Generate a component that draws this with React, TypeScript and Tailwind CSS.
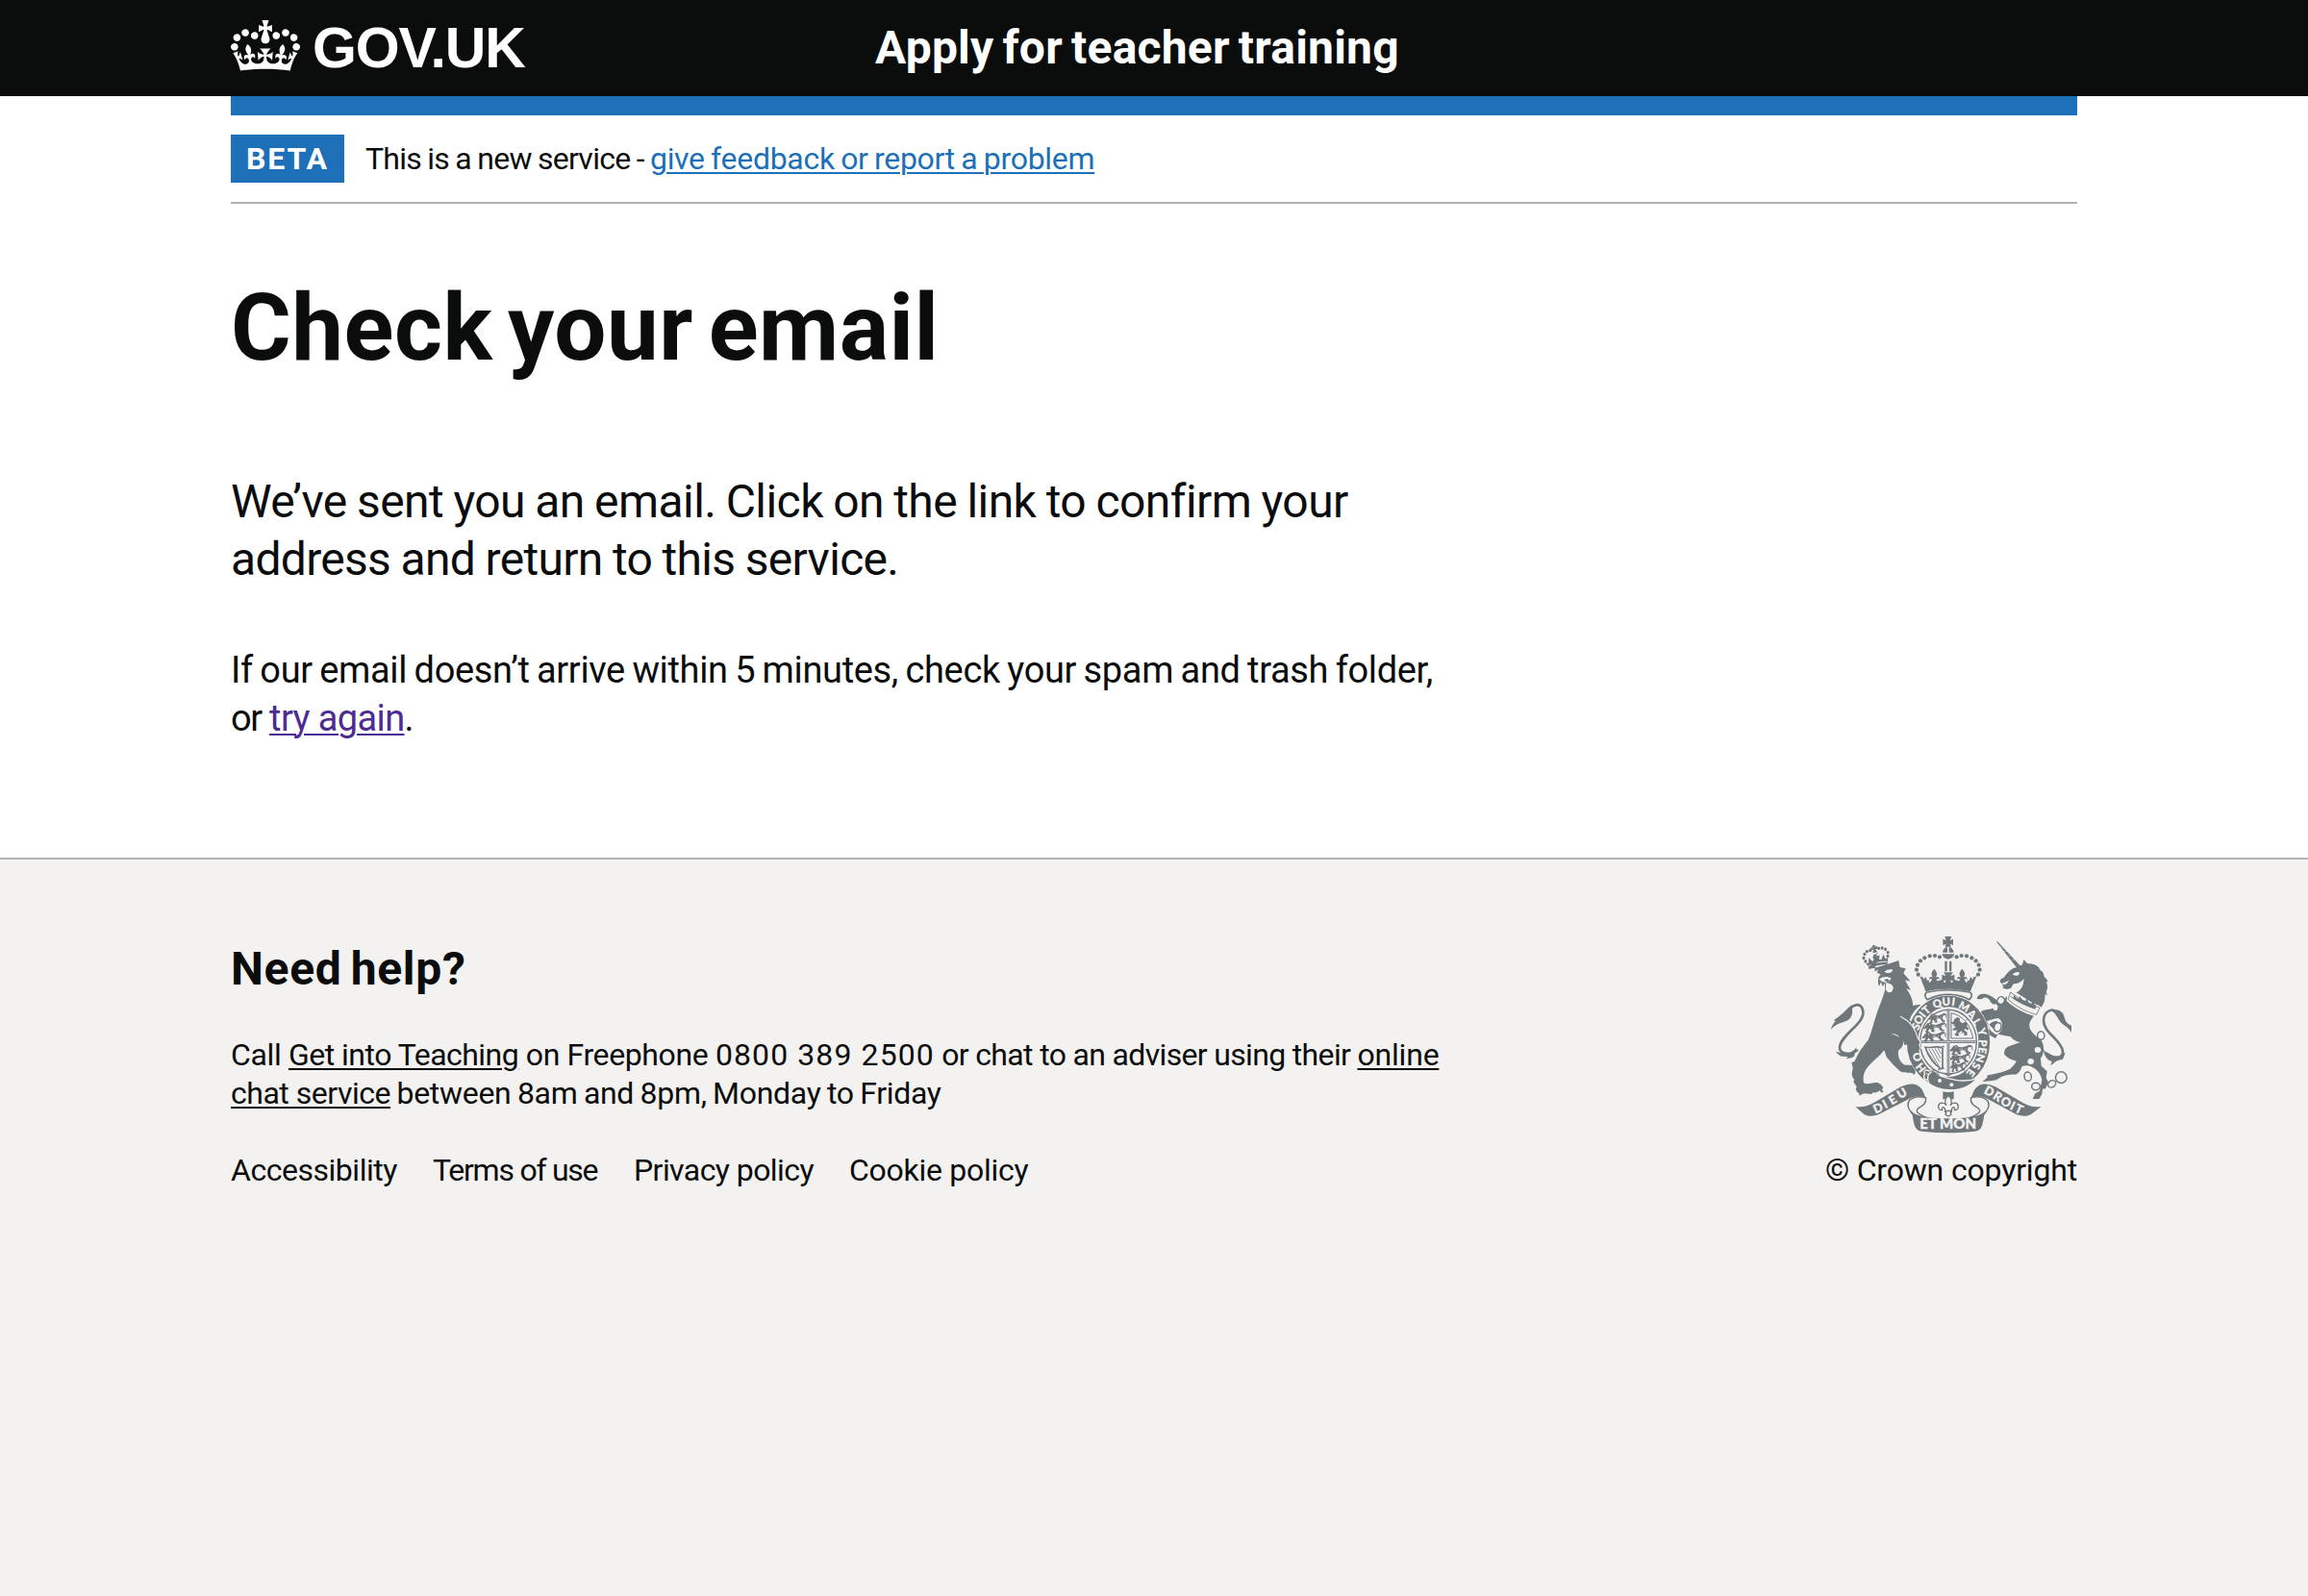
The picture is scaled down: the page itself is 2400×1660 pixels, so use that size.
import React from 'react';

const INK = '#6f777b';
const PAPER = '#f3f2f1';

function Crown() {
  return (
    <svg className="mt-px block h-[53px] w-[72px]" viewBox="0 0 132 97" fill="currentColor" aria-hidden="true">
      <path
        fillRule="evenodd"
        d="M25 30.2c3.5 1.5 7.7-.2 9.1-3.7 1.5-3.6-.2-7.8-3.9-9.2-3.6-1.4-7.6.3-9.1 3.9-1.4 3.5.3 7.5 3.9 9zM9 39.5c3.6 1.5 7.8-.2 9.2-3.7 1.5-3.6-.2-7.8-3.9-9.1-3.6-1.5-7.6.2-9.1 3.8-1.4 3.5.3 7.5 3.8 9zM4.4 57.2c3.5 1.5 7.7-.2 9.1-3.8 1.5-3.6-.2-7.7-3.9-9.1-3.5-1.5-7.6.3-9.1 3.8-1.4 3.5.3 7.6 3.9 9.1zm38.3-21.4c3.5 1.5 7.7-.2 9.1-3.8 1.5-3.6-.2-7.7-3.9-9.1-3.6-1.5-7.6.3-9.1 3.8-1.3 3.6.4 7.7 3.9 9.1zm64.4-5.6c-3.6 1.5-7.8-.2-9.1-3.7-1.5-3.6.2-7.8 3.8-9.2 3.6-1.4 7.7.3 9.2 3.9 1.3 3.5-.4 7.5-3.9 9zm15.9 9.3c-3.6 1.5-7.7-.2-9.1-3.7-1.5-3.6.2-7.8 3.7-9.1 3.6-1.5 7.7.2 9.2 3.8 1.5 3.5-.3 7.5-3.8 9zm4.7 17.7c-3.6 1.5-7.8-.2-9.2-3.8-1.5-3.6.2-7.7 3.9-9.1 3.6-1.5 7.7.3 9.2 3.8 1.3 3.5-.4 7.6-3.9 9.1zM89.3 35.8c-3.6 1.5-7.8-.2-9.2-3.8-1.4-3.6.2-7.7 3.9-9.1 3.6-1.5 7.7.3 9.2 3.8 1.4 3.6-.3 7.7-3.9 9.1zM69.7 17.7l8.9 4.7V9.3l-8.9 2.8c-.2-.3-.5-.6-.9-.9L72.4 0H59.6l3.5 11.2c-.3.3-.6.5-.9.9l-8.8-2.8v13.1l8.8-4.7c.3.3.6.7.9.9l-5 15.4v.1c-.2.8-.4 1.6-.4 2.4 0 4.1 3.1 7.5 7 8.1h.2c.3 0 .7.1 1 .1.4 0 .7 0 1-.1h.2c4-.6 7.1-4.1 7.1-8.1 0-.8-.1-1.7-.4-2.4V34l-5.1-15.4c.4-.2.7-.6 1-.9zM66 92.8c16.9 0 32.8 1.1 47.1 3.2 4-16.9 8.9-26.7 14-33.5l-9.6-3.4c1 4.9 1.1 7.2 0 10.2-1.5-1.4-3-4.3-4.2-8.7L108.6 76c2.8-2 5-3.2 7.5-3.3-4.4 9.4-10 11.9-13.6 11.2-4.3-.8-6.3-4.6-5.6-7.9 1-4.7 5.7-5.9 8-.5 4.3-8.7-3-11.4-7.6-8.8 7.1-7.2 7.9-13.5 2.1-21.1-8 6.1-8.1 12.3-4.5 20.8-4.7-5.4-12.1-2.5-9.5 6.2 3.4-5.2 7.9-2 7.2 3.1-.6 4.3-6.4 7.8-13.5 7.2-10.3-.9-10.9-8-11.2-13.8 2.5-.5 7.1 1.8 11 7.3L80.2 60c-4.1 4.4-8 5.3-12.3 5.4 1.4-4.4 8-11.6 8-11.6H55.5s6.4 7.2 7.9 11.6c-4.2-.1-8-1-12.3-5.4l1.4 16.4c3.9-5.5 8.5-7.7 10.9-7.3-.3 5.8-.9 12.8-11.1 13.8-7.2.6-12.9-2.9-13.5-7.2-.7-5 3.8-8.3 7.1-3.1 2.7-8.7-4.6-11.6-9.4-6.2 3.7-8.5 3.6-14.7-4.6-20.8-5.8 7.6-5 13.9 2.2 21.1-4.7-2.6-11.9.1-7.7 8.8 2.3-5.5 7.1-4.2 8.1.5.7 3.3-1.3 7.1-5.7 7.9-3.5.7-9-1.8-13.5-11.2 2.5.1 4.7 1.3 7.5 3.3l-4.7-15.4c-1.2 4.4-2.7 7.2-4.3 8.7-1.1-3-.9-5.3 0-10.2l-9.5 3.4c5 6.9 9.9 16.7 14 33.5 14.8-2.1 30.8-3.2 47.7-3.2z"
      />
    </svg>
  );
}

/* Letters on the garter and scrolls: character, centre x, centre y, rotation */
const GARTER: [string, number, number, number][] = [
  ['H', 352, 452, -128],
  ['O', 341, 418, -112],
  ['S', 337, 323, -66],
  ['O', 345, 301, -57],
  ['I', 357, 285, -50],
  ['T', 369, 271, -42],
  ['Q', 403, 251, -18],
  ['U', 431, 245, -3],
  ['I', 454, 246, 8],
  ['M', 487, 261, 28],
  ['A', 511, 284, 43],
  ['L', 527, 309, 60],
  ['Y', 543, 340, 72],
  ['P', 546, 375, 92],
  ['E', 545, 398, 98],
  ['N', 538, 422, 106],
  ['S', 525, 446, 116],
  ['E', 508, 467, 126],
];
const SCROLLS: [string, number, number, number][] = [
  ['D', 218, 577, -24],
  ['I', 240, 565, -28],
  ['E', 264, 551, -31],
  ['U', 293, 531, -31],
  ['D', 566, 525, 28],
  ['R', 592, 541, 32],
  ['O', 618, 558, 30],
  ['I', 639, 570, 26],
  ['T', 659, 580, 24],
];

const BEADS: [number, number][] = [
  [411, 106],
  [396, 102],
  [380, 103],
  [364, 109],
  [351, 118],
  [342, 131],
  [339, 146],
  [344, 161],
];

const LION_CROWN_BEADS: [number, number][] = [
  [13, -22],
  [23, -21],
  [32, -15],
  [37, -5],
  [34, 5],
];

function Glyphs({ items, size }: { items: [string, number, number, number][]; size: number }) {
  return (
    <g
      fill={PAPER}
      stroke={PAPER}
      strokeWidth="0.8"
      fontFamily="Lato, sans-serif"
      fontWeight={900}
      fontSize={size}
      textAnchor="middle"
    >
      {items.map(([ch, x, y, r], i) => (
        <text key={i} transform={`translate(${x} ${y}) rotate(${r})`} y={size * 0.36}>
          {ch}
        </text>
      ))}
    </g>
  );
}

function PassantLion({ x, y, w = 1 }: { x: number; y: number; w?: number }) {
  return (
    <g transform={`translate(${x} ${y}) scale(${w} 1.12)`}>
      <path
        fill={INK}
        d="M2 8l5-5 8-1 4 5 10 1 10-3 9-4 7 2-3 4-6 1-3 6 3 6 6 2-1 4-9-1-6-8-6-2-8 4 4 5-2 4-8-1 1-4-5-4-4 5 2 4-5 2-6-3 3-3 2-7-6 3-4-3 4-3z"
      />
      <circle cx="12" cy="7" r="1.6" fill={PAPER} />
      <path d="M22 14l8-2M40 12l-4 3" stroke={PAPER} strokeWidth="1.6" />
      <path d="M50 4l7 3-3 5 4 3" fill="none" stroke={INK} strokeWidth="2.5" />
    </g>
  );
}

function FleurAndArches() {
  return (
    <g fill={INK}>
      {BEADS.map(([x, y]) => (
        <circle key={x} cx={x} cy={y} r="6.3" />
      ))}
      <path d="M394 143c10 11 11 18 4 27 5-4 12-2 12 6-3-3-7-3-9 1l8 12h-30l8-12c-2-4-6-4-9-1 0-8 7-10 12-6-7-9-6-16 4-27z" />
      <path d="M349 166l12 4-2 8 9-10 4 12 6-2-2 16-15 2z" />
      <path d="M360 176l22 10 26-6 12-4 6 12v12h-56z" />
    </g>
  );
}

function CoatOfArms() {
  return (
    <svg className="block h-[214px] w-[260px]" viewBox="60 30 780 642" aria-hidden="true">
      {/* Imperial crown */}
      <path fill={INK} d="M427 42h21l-5 12 10-4v19l-10-4 4 9h-20l4-9-10 4V50l10 4z" />
      <path
        fill={INK}
        d="M420 92c1-10 7-16 15-17v17zM455 92c-1-10-7-16-15-17v17zM418 97h39c-2 9-9 15-19 16-11-1-18-7-20-16z"
      />
      <path fill={INK} d="M427 119h7v32h-7zM441 119h7v32h-7z" />
      <path fill={INK} d="M423 154h30l-9 12 13-5v22l-13-5 6 14h-25l6-14-13 5v-22l13 5z" />
      <FleurAndArches />
      <g transform="matrix(-1 0 0 1 875 0)">
        <FleurAndArches />
      </g>
      <path fill={INK} d="M357 184c25 4 48 2 80 2s56 2 81-2l-11 30c-45-10-95-10-140 0z" />
      <path
        d="M372 216c44-9 88-9 132 0 9 3 9 14 0 23-43-21-89-21-132 0-8-7-9-20 0-23z"
        fill={PAPER}
        stroke={INK}
        strokeWidth="5"
      />

      {/* Lion */}
      <g transform="translate(213 106) rotate(-13) scale(1.05 1.1)">
        <g fill={INK}>
          {LION_CROWN_BEADS.map(([x, y]) => (
            <React.Fragment key={x}>
              <circle cx={-x} cy={y} r="4.5" />
              <circle cx={x} cy={y} r="4.5" />
            </React.Fragment>
          ))}
          <path d="M-5-34H5l-2 6 7-2v9l-7-2 4 10H-7l4-10-7 2v-9l7 2z" />
          <path d="M-34 9l8 3 4-15 8 13 7-1-4-12h22l-4 12 7 1 8-13 4 15 8-3-7 19c-18-5-36-5-54 0z" />
        </g>
        <path d="M-28 20c18-5 38-5 56 0" fill="none" stroke={PAPER} strokeWidth="2.5" />
      </g>
      <path
        fill={INK}
        d="M188 144c30-4 62-16 95-27l4 21 18 4-7 15c8 8 14 17 22 25l-17-4c5 10 11 21 18 31l-14-4c8 11 14 23 18 34l3 19c8-3 16-3 25-3-17 12-29 28-36 47 11 11 18 27 20 43l9 12-2 22 9 1-6 8-21-14-2-14-10-4-4 8-9-10c-13-9-25-8-41-8 16 5 27 10 36 19 4 15-2 24-14 33-2 19 3 33 17 44 9 3 18 0 28 2 10 4 17 11 21 19-1 4-3 7-5 7-2-4-5-6-9-7 2 5 0 9-4 11-2-5-5-7-9-7-10 0-22 1-33-4-14-12-29-27-43-45l-7-21c-15 20-35 33-52 53-12 15-15 29-12 49 13 7 26-3 42-1 8 3 16 7 19 17l-5 4 5 7-4 4-8-7c-6 6-13 7-20 6l-5 5-24-2-14 7c1-6-1-9-6-11l-5-9 3-8-10-15 3-6c-5-7-8-13-8-20l3-17-4-18 9-2c12-29 26-47 43-68 11-26 17-54 27-84 9-24 19-47 26-73-2-7-1-15 0-22l-8 12-5-14-6 14c-5-11-4-25 1-37l-5 5c-3-8-2-15 1-22l-10 8c-2-13 3-24 10-34l-14-6-1-12c6-2 12-5 16-10z"
      />
      <path
        fill={PAPER}
        d="M198 163c9-7 21-8 29-2-7 9-18 11-29 2zM238 152c9-7 18-9 27-6-3 9-13 14-27 6zM222 176c9-9 27-11 38-3l-6 8-6 1-2 5c12 2 21 8 20 17-1 8-6 13-12 13-9-1-13-10-11-20l1-11-12-3z"
      />
      <path fill={INK} d="M237 178l9-4 8 4-7 7z" />
      <path
        d="M116 288c12-28 49-50 56-13 6 39-68 72-73 112-1 22 28 28 57 9"
        fill="none"
        stroke={INK}
        strokeWidth="8"
      />
      <path
        fill={INK}
        d="M72 333c2-13 8-20 14-27l-6-3c8-3 14-10 24-18 10-6 16-17 35-30-3 16 5 31-11 46-13 11-38 8-56 32z"
      />
      <path fill={INK} d="M87 401l18 5c15 6 34-2 47-18l-8 28c-6 6-16 5-24 8l4-7-19-1c-6-3-13-8-18-15z" />

      {/* Unicorn */}
      <path fill={INK} d="M587 57l6 2 71 76-12 5z" />
      <path d="M600 74l8 2M612 88l9 1M624 102l10 0M636 115l9-1" stroke={PAPER} strokeWidth="1" />
      <path
        fill={INK}
        d="M652 138l17-8 4-16 12 13c14-1 27 3 35 12l5 9c8 3 11 11 12 20 7 5 10 10 11 17l-6-2c6 9 7 20 2 30-1 7 2 10 4 13l-9-3c2 15-2 28-11 40-7-6-15-9-23-11l-58-37c15-7 26-21 27-41-9 11-23 17-33 16l-8 14-14 3c-4-3-8-4-13-2l6-8-6 1 3-6-8-6c-4-8 1-13 9-14 10-15 25-32 42-34z"
      />
      <path
        fill={PAPER}
        d="M638 161c7-7 15-10 22-6 0 9-9 12-22 6zM605 188l15-5 7-5-4 9-9 6zM672 179c-5 14-18 24-33 25l-12 5 4 11c23 1 42-13 41-41z"
      />
      <path
        d="M632 216c28 22 57 37 91 49l-10 21c-33-9-63-25-89-48z"
        fill={PAPER}
        stroke={INK}
        strokeWidth="2.5"
      />
      <path
        fill={INK}
        d="M632 228l9 5 2-9 8 10 8 2 1-9 10 14 9 2 3-9 7 15 9 2 4-8 4 12 7 2-4 12c-29-8-55-21-79-40z"
      />
      <path
        fill={INK}
        d="M620 244c26 23 54 38 85 46-14 16-19 30-9 46 7 12 20 20 33 32 9 16 9 38-3 54l2 24 18 17-3 20 7 14-9 20-9 1-2 16-9 15h-20l8-17 14-8 7-34c-3-19-15-33-34-42-9-5-18-3-28-1-4 13-10 22-20 26-14-1-28 1-43 6l-17 11-17 3-27 2 14-11 3-9 17-3c17-5 35-7 53-17 8-8 15-14 19-24-16-4-27-10-37-21-2-14 4-23 18-27l32-11c-13-1-21-6-31-17l-39-8-8 13-23-13-10-17 15 4-4-12c-9-9-12-23-17-35l-13-2 10-11c16-4 37-7 51-12l-7-10c-9 5-16-1-20-11-6-10-17-12-25-3l-15-1c1-12 11-17 25-16 17 2 33 17 50 28 7-5 13-14 19-22z"
      />
      <path
        fill={PAPER}
        d="M558 306c5 12 7 26 18 35l11 8c8-1 12-8 17-16 5-17 0-30-10-36-13 2-24 5-36 9z"
      />
      <path fill={INK} d="M566 318c4-9 15-12 25-12l-7 30z" />
      <g fill={PAPER} stroke={INK} strokeWidth="4.5">
        <ellipse cx="602" cy="242" rx="11" ry="12" transform="rotate(35 602 242)" />
        <ellipse cx="592" cy="325" rx="11" ry="14" transform="rotate(15 592 325)" />
        <ellipse cx="727" cy="351" rx="11" ry="13" />
        <ellipse cx="686" cy="479" rx="11" ry="14" transform="rotate(-10 686 479)" />
        <ellipse cx="711" cy="510" rx="13" ry="11" />
        <ellipse cx="761" cy="502" rx="13" ry="10" transform="rotate(-35 761 502)" />
        <circle cx="790" cy="482" r="17.5" />
      </g>
      <g fill={PAPER}>
        <ellipse cx="717" cy="396" rx="10" ry="9" />
        <ellipse cx="695" cy="432" rx="10" ry="9" />
        <circle cx="585" cy="266" r="7" />
      </g>
      <path
        d="M778 284c-8-23-42-12-43 20-1 38 55 60 60 96 1 21-22 28-52 6"
        fill="none"
        stroke={INK}
        strokeWidth="8"
      />
      <path
        fill={INK}
        d="M758 273c19-6 34 0 40 14 4 14 6 26 24 33v21c-9-15-20-20-29-27-13-10-15-29-35-41z"
      />
      <path fill={INK} d="M735 394c12 18 32 26 50 20l18-10-8 21-18 5-20 15 4-13c-14-3-25-17-26-38z" />

      {/* Garter */}
      <ellipse cx="438" cy="371" rx="131" ry="146" fill={PAPER} />
      <ellipse cx="438" cy="371" rx="112" ry="127" fill="none" stroke={INK} strokeWidth="35" />
      <ellipse cx="438" cy="371" rx="88" ry="100" fill={PAPER} stroke={INK} strokeWidth="4" />
      <Glyphs items={GARTER} size={34} />

      {/* Shield quarters */}
      <path d="M438 268v202M352 371h172" stroke={INK} strokeWidth="8" />
      <path d="M438 268v202M352 371h172" stroke={PAPER} strokeWidth="2" />
      <PassantLion x={380} y={280} w={0.92} />
      <PassantLion x={366} y={309} w={1.15} />
      <PassantLion x={362} y={338} w={1.2} />
      <PassantLion x={448} y={379} w={1.15} />
      <PassantLion x={448} y={406} w={1.02} />
      <PassantLion x={448} y={432} w={0.8} />
      <path d="M447 281c33 6 60 34 68 79h-68z" fill="none" stroke={INK} strokeWidth="3" />
      <path
        fill={INK}
        d="M457 300l9-6 8 4-1 7 8 8 9-4 9 6-4 6 7 9-4 5-7-6-4 5 10 8-1 9-10-1 2-5-10-8-9 8 3 6-9 2-6-6 6-4 1-10-9 3-4-5 9-5-2-9-9-3-4-5 8 1z"
      />
      <path d="M453 318l8 4M492 305l6-6M478 346l8-8" stroke={INK} strokeWidth="3" />
      <path
        fill={PAPER}
        stroke={INK}
        strokeWidth="5"
        d="M366 388c17 3 32-6 54 2v62c-5 5-10 2-11-3-15-7-33-31-43-61z"
      />
      <path
        d="M378 394l29 50M387 392l24 42M396 391l18 31M405 390l11 18M370 398l28 40"
        stroke={INK}
        strokeWidth="2.6"
      />
      <path d="M405 457l20-4M416 388l9-4" stroke={INK} strokeWidth="4" />

      {/* Buckle and strap */}
      <path
        d="M378 462c-10-7-18 0-14 10-4 8-1 18 9 26 38 29 98 32 138 3l18-17c-32 13-76 9-121-9-4-12-18-18-30-13z"
        fill={INK}
        stroke={PAPER}
        strokeWidth="4"
      />
      <path d="M386 464c-11 5-17 20-9 34" fill="none" stroke={PAPER} strokeWidth="4" />
      <path d="M368 469l9 4M366 489l10-3" stroke={PAPER} strokeWidth="3" />
      <circle cx="411" cy="492" r="6" fill={PAPER} />
      <circle cx="448" cy="505" r="6" fill={PAPER} />
      <path d="M382 462c9-6 22-2 26 12-1 9-12 12-18 6" fill="none" stroke={INK} strokeWidth="3" />
      <path d="M424 468l14 8 14-8" fill="none" stroke={INK} strokeWidth="4" />

      {/* Lion's foreleg resting on the garter */}
      <path
        fill={INK}
        d="M284 290c32 13 51 40 58 72l8 8-3 11 4 11-9 6-8-6-6 7-6-9-9 2-2-13-10 2-4-14-8 1-7-16-14-8 10-25z"
      />
      <path d="M288 291c28 14 48 38 55 69l8 9-3 12 4 12" fill="none" stroke={PAPER} strokeWidth="3.5" />

      {/* Motto scrolls */}
      <path
        fill={INK}
        d="M148 573c24 4 44-4 64-16l78-46c30-15 55-10 66 9 6 10 7 18 12 26-14-8-38-8-57 5l-84 43c-16 9-38 12-52 3z"
      />
      <path
        fill={INK}
        d="M728 573c-24 4-44-4-64-16l-79-46c-30-15-54-10-65 9-6 10-7 18-12 26 14-8 38-8 57 5l79 43c16 9 38 12 52 3z"
      />
      <g fill={PAPER} stroke={INK} strokeWidth="4.5" strokeLinejoin="round">
        <path d="M368 546c-26-8-58-2-56 24 1 12 9 18 14 26 15 10 33 13 52 14-16-6-34-12-38-22-3-16 30-12 28-42z" />
        <path d="M508 546c26-8 58-2 56 24-1 12-9 18-14 26-15 10-33 13-52 14 16-6 34-12 38-22 3-16-30-12-28-42z" />
      </g>
      <path
        fill={INK}
        d="M322 586c12 17 55 24 116 24s104-7 116-24c-6 14-5 28-10 43-4 16-14 20-30 22-50 5-102 5-152 0-16-2-26-6-30-22-5-15-4-29-10-43z"
      />
      <Glyphs items={SCROLLS} size={38} />
      <text
        x="437"
        y="643"
        fill={PAPER}
        stroke={PAPER}
        strokeWidth="1"
        fontFamily="Lato, sans-serif"
        fontWeight={900}
        fontSize="43"
        textAnchor="middle"
        textLength="176"
        lengthAdjust="spacingAndGlyphs"
      >
        ET MON
      </text>

      {/* Fleur-de-lis badge */}
      <path fill={INK} d="M421 526c11 3 23 3 34 0v24h-34z" />
      <path
        d="M438 538c11 10 13 18 7 30 5-9 22-10 24 3 1 8-4 14-12 13 2-4 1-8-3-9-4 1-6 6-6 11v4h-4l3 8-9 5-9-5 3-8h-4v-4c0-5-2-10-6-11-4 1-5 5-3 9-8 1-13-5-12-13 2-13 19-12 24-3-6-12-4-20 7-30z"
        fill={PAPER}
        stroke={INK}
        strokeWidth="4"
        strokeLinejoin="round"
      />
      <path d="M426 586h24" stroke={INK} strokeWidth="4" />
    </svg>
  );
}

const LINK = 'underline decoration-2 underline-offset-[3px]';

export default function App() {
  return (
    <div className="flex min-h-screen flex-col bg-white font-['Roboto','Liberation_Sans',sans-serif] text-[#0b0c0c]">
      <header className="h-[100px] bg-[#0b0c0c] text-white">
        <div className="mx-auto flex w-[1920px]">
          <a className="flex w-[670px] pt-5">
            <Crown />
            <span className="ml-[13px] font-['Liberation_Sans',sans-serif] text-[59px] leading-[60px] font-bold tracking-[-1.1px]">
              GOV.UK
            </span>
          </a>
          <a className="pt-[25px] text-[48px] leading-[50px] font-bold tracking-[0.2px] [word-spacing:-3px]">
            Apply for teacher training
          </a>
        </div>
      </header>

      <div className="mx-auto w-[1920px]">
        <div className="h-5 bg-[#1d70b8]" />
        <div className="flex h-[92px] items-center border-b-2 border-[#b1b4b6] text-[32px] leading-[50px]">
          <strong className="h-[50px] w-[118px] bg-[#1d70b8] pl-[16px] tracking-[1.9px] text-white">BETA</strong>
          <p className="ml-[22px] whitespace-pre">
            <span className="tracking-[-0.73px] [word-spacing:-1px]">This is a new service - </span>
            <a className={`text-[#1d70b8] tracking-[-0.3px] [word-spacing:-1.3px] ${LINK}`}>
              give feedback or report a problem
            </a>
          </p>
        </div>
      </div>

      <main className="mx-auto w-[1920px] pt-[79px] pb-[120px]">
        <h1 className="mb-[101px] text-[96px] leading-[100px] font-bold tracking-[0.5px] [word-spacing:-8.5px]">
          Check your email
        </h1>
        <p className="mb-[60px] text-[48px] leading-[60px]">
          <span className="tracking-[-0.55px] [word-spacing:-1.1px]">
            We’ve sent you an email. Click on the link to confirm your
          </span>
          <br />
          <span className="tracking-[-0.7px] [word-spacing:-0.8px]">address and return to this service.</span>
        </p>
        <p className="text-[38px] leading-[50px]">
          <span className="tracking-[-0.35px] [word-spacing:-1.6px]">
            If our email doesn’t arrive within 5 minutes, check your spam and trash folder,
          </span>
          <br />
          <span className="tracking-[-1.3px]">or </span>
          <a className={`tracking-[-0.61px] text-[#4c2c92] ${LINK}`}>try again</a>.
        </p>
      </main>

      <footer className="flex-1 border-t-2 border-[#b1b4b6] bg-[#f3f2f1] text-[32px] leading-[40px]">
        <div className="mx-auto flex w-[1920px] justify-between">
          <div className="pt-[84px]">
            <h2 className="mb-[39px] text-[48px] leading-[60px] font-bold tracking-[0.7px] [word-spacing:-3.5px]">
              Need help?
            </h2>
            <p className="mb-10">
              <span className="tracking-[-0.35px]">Call </span>
              <a className={`tracking-[-0.52px] ${LINK}`}>Get into Teaching</a>
              <span className="tracking-[-0.38px]"> on Freephone </span>
              <span className="tracking-[1.1px]">0800 389 2500</span>
              <span className="tracking-[-0.66px]"> or chat to an adviser using their </span>
              <a className={`tracking-[-0.2px] ${LINK}`}>online</a>
              <br />
              <a className={`tracking-[-0.48px] ${LINK}`}>chat service</a>
              <span className="tracking-[-0.3px] [word-spacing:-1.2px]"> between 8am and 8pm, Monday to Friday</span>
            </p>
            <ul className="flex">
              <li className="w-[210px] tracking-[-0.47px]">Accessibility</li>
              <li className="w-[209px] tracking-[-1.25px]">Terms of use</li>
              <li className="w-[224px] tracking-[-0.57px]">Privacy policy</li>
              <li className="tracking-[-0.27px]">Cookie policy</li>
            </ul>
          </div>
          <div className="flex flex-col items-end pt-[76px]">
            <CoatOfArms />
            <a className="mt-[13px] tracking-[-0.17px]">© Crown copyright</a>
          </div>
        </div>
      </footer>
    </div>
  );
}
